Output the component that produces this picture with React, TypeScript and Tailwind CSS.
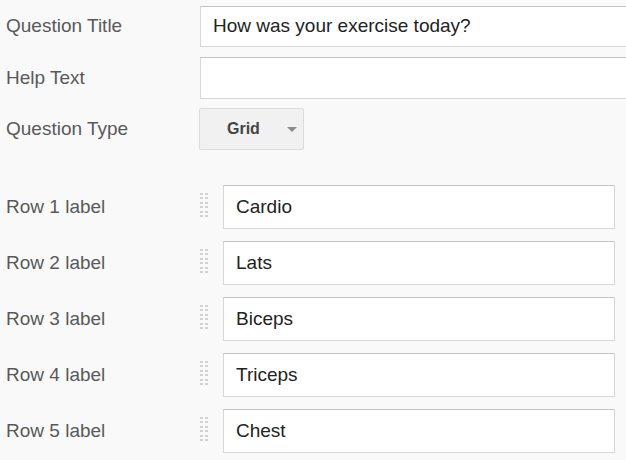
import React from 'react';

const rows = ['Cardio', 'Lats', 'Biceps', 'Triceps', 'Chest'];

function DragHandle() {
  return (
    <div className="grid grid-cols-2 gap-x-[2px] gap-y-[2.5px] w-[8px]">
      {Array.from({ length: 12 }).map((_, i) => (
        <span key={i} className="block w-[3px] h-[2px] bg-[#d2d2d2]"></span>
      ))}
    </div>
  );
}

export default function App() {
  return (
    <div className="w-full min-h-screen overflow-hidden bg-[#f9f9f9] pt-[6px] font-['Liberation_Sans',Arial,sans-serif]">

      {/* Question title */}
      <div className="flex items-center h-[41px]">
        <div className="w-[200px] shrink-0 pl-[6px] text-[19px] text-[#595959]">Question Title</div>
        <div className="w-[450px] shrink-0 h-full bg-white border border-[#d6d6d6] border-t-[#c4c4c4] flex items-center pl-[12px] text-[19px] text-[#222]">
          How was your exercise today?
        </div>
      </div>

      {/* Help text */}
      <div className="flex items-center h-[42px] mt-[10px]">
        <div className="w-[200px] shrink-0 pl-[6px] text-[19px] text-[#595959]">Help Text</div>
        <div className="w-[450px] shrink-0 h-full bg-white border border-[#d6d6d6] border-t-[#c4c4c4]"></div>
      </div>

      {/* Question type */}
      <div className="flex items-center h-[42px] mt-[9px]">
        <div className="w-[199px] shrink-0 pl-[6px] text-[19px] text-[#595959]">Question Type</div>
        <div className="w-[105px] h-full bg-[#f1f1f1] border border-[#dcdcdc] rounded-[2px] flex items-center pl-[27px]">
          <span className="text-[16px] font-bold text-[#444]">Grid</span>
          <span className="ml-[27px] w-0 h-0 border-l-[5px] border-r-[5px] border-t-[5px] border-l-transparent border-r-transparent border-t-[#8a8a8a]"></span>
        </div>
      </div>

      {/* Grid rows */}
      <div className="mt-[35px] flex flex-col gap-[12px]">
        {rows.map((value, idx) => (
          <div key={idx} className="flex items-center h-[44px]">
            <div className="w-[199px] shrink-0 pl-[6px] text-[19px] text-[#595959]">Row {idx + 1} label</div>
            <div className="w-[24px] shrink-0 flex items-center pl-[1px] -mt-[4px]">
              <DragHandle />
            </div>
            <div className="w-[392px] shrink-0 h-full bg-white border border-[#d6d6d6] border-t-[#c4c4c4] flex items-center pl-[12px] text-[19px] text-[#222]">
              {value}
            </div>
          </div>
        ))}
      </div>
    </div>
  );
}
